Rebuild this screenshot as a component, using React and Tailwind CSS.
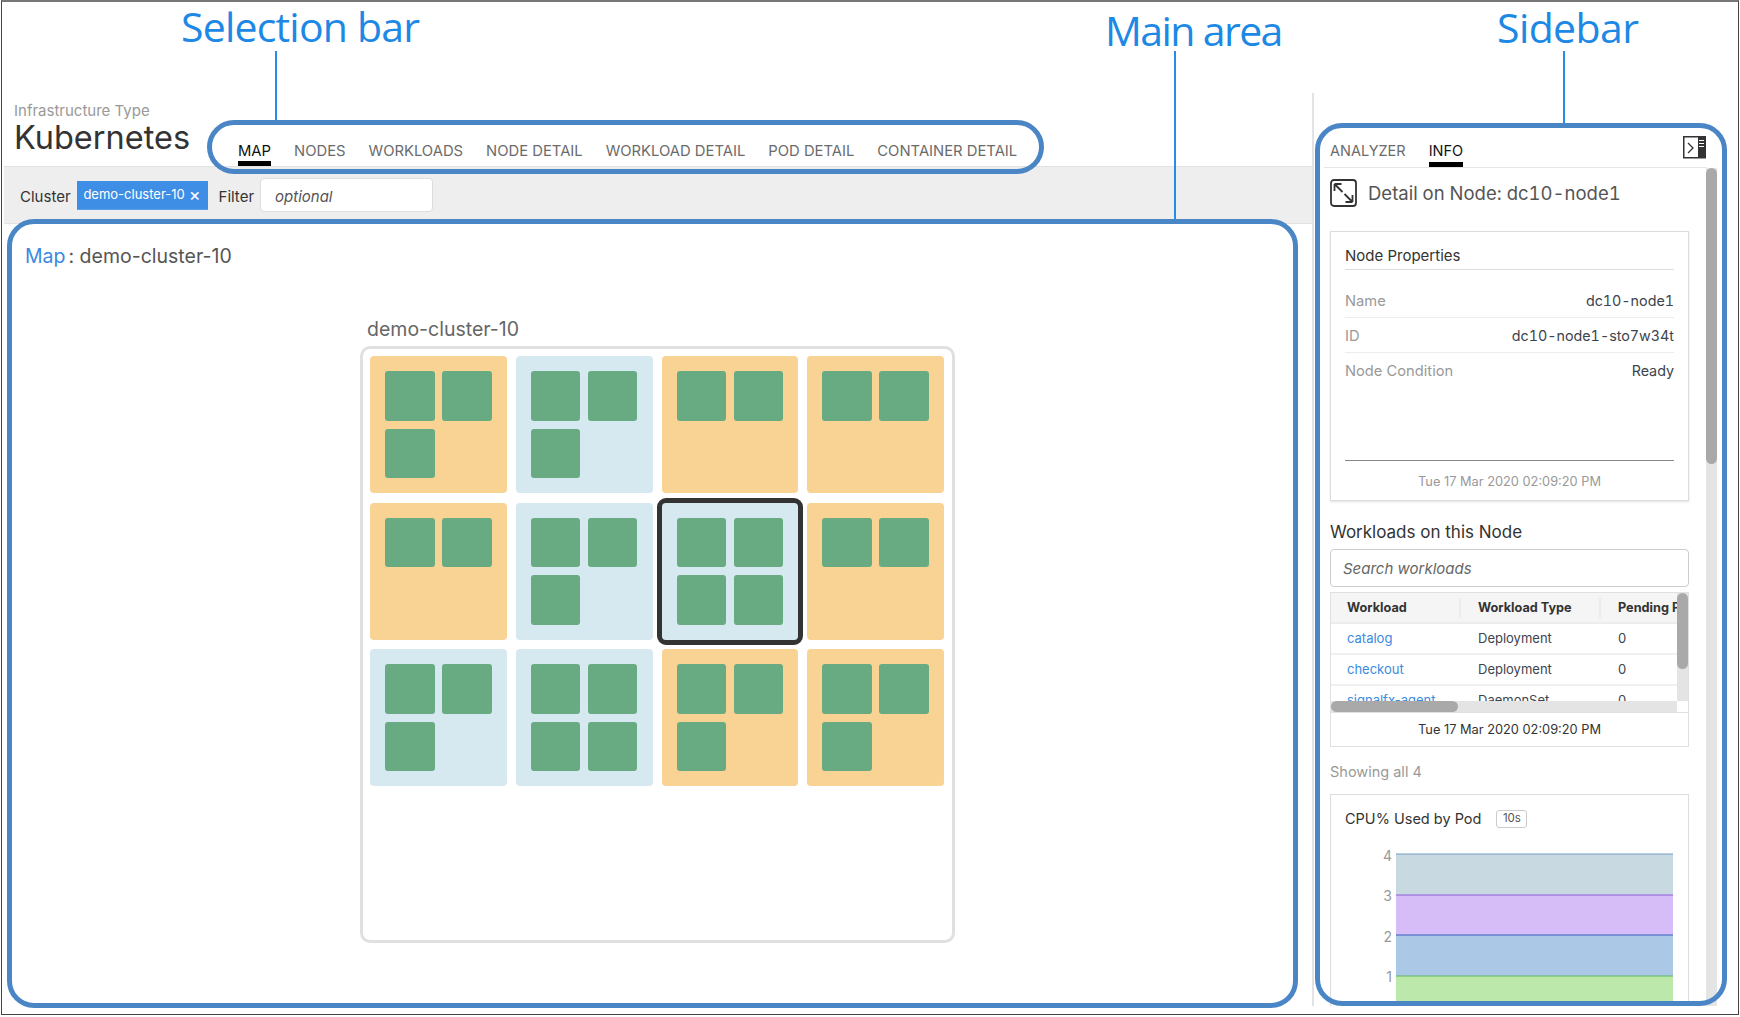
import React from "react";

const O = "bg-[#f9d394]";
const B = "bg-[#d6e9f1]";
const tiles = [
  [O, 3], [B, 3], [O, 2], [O, 2],
  [O, 2], [B, 3], [B, 4, true], [O, 2],
  [B, 3], [B, 4], [O, 3], [O, 3],
];

function Tile({ color, pods, selected }) {
  return (
    <div className={`${color} rounded-[4px] pl-[15px] pt-[15px] ${selected ? "outline-[5px] outline-[#333333]" : ""}`}>
      <div className="grid grid-cols-[49.5px_49.5px] gap-x-[7.5px] gap-y-[8px]">
        {Array.from({ length: pods }).map((_, i) => (
          <div key={i} className="h-[49.5px] rounded-[3px] bg-[#68aa82]" />
        ))}
      </div>
    </div>
  );
}

function ExpandIcon() {
  return (
    <svg width="27" height="28" viewBox="0 0 27 28" fill="none" stroke="#333" strokeWidth="1.8">
      <rect x="1" y="1" width="25" height="26" rx="3" />
      <path d="M4.5 5 L12.5 13 M4.5 5 h7 M4.5 5 v7 M22.5 23 L14.5 15 M22.5 23 h-7 M22.5 23 v-7" />
    </svg>
  );
}

function PanelIcon() {
  return (
    <svg width="23" height="23" viewBox="0 0 23 23" fill="none">
      <rect x="0.75" y="0.75" width="21.5" height="21" fill="#fff" stroke="#333" strokeWidth="1.5" />
      <rect x="15" y="1" width="7" height="21" fill="#333" />
      <path d="M16 4.5h5M16 7.5h5M16 10.5h5" stroke="#fff" strokeWidth="1" />
      <path d="M5 7l5 5-5 5" stroke="#333" strokeWidth="1.3" />
    </svg>
  );
}

function PropRow({ label, value, last }) {
  return (
    <div className={`h-[35px] flex items-center justify-between text-[14.7px] ${last ? "pt-[1px]" : "pt-[2px] border-b border-[#ececec]"}`}>
      <span className="text-[#999999]">{label}</span>
      <span className="text-[14.3px] text-[#3c444d] tabular-nums">{value}</span>
    </div>
  );
}

function TableRow({ a, b, c }) {
  return (
    <div className="grid grid-cols-[130px_140px_1fr] h-[31px] items-center border-b-2 border-[#f0f0f0] text-[13px] text-[#3c444d]">
      <span className="pl-[16px] text-[#3a8ae0]">{a}</span>
      <span className="pl-[17px]">{b}</span>
      <span className="pl-[17px]">{c}</span>
    </div>
  );
}

function Chart() {
  return (
    <svg width="329" height="170" viewBox="0 0 329 170" className="block mt-[16px]">
      <rect x="51" y="9" width="277" height="41" fill="#c9d9e1" />
      <rect x="51" y="50" width="277" height="40" fill="#d7bdf7" />
      <rect x="51" y="90" width="277" height="41" fill="#abc8e6" />
      <rect x="51" y="131" width="277" height="39" fill="#bce8ab" />
      <path d="M51 9h277" stroke="#6f9fc0" />
      <path d="M51 50h277" stroke="#8a5fd8" />
      <path d="M51 90h277" stroke="#3a5fc0" />
      <path d="M51 131h277" stroke="#5cb85c" />
      <g fill="#999" fontSize="14" fontFamily="Inter, sans-serif" textAnchor="end">
        <text x="47" y="16">4</text>
        <text x="47" y="56">3</text>
        <text x="47" y="97">2</text>
        <text x="47" y="137">1</text>
      </g>
    </svg>
  );
}

export default function App() {
  return (
    <div className="relative w-[1740px] h-[1017px] bg-white overflow-hidden font-['Inter',sans-serif]">
      <div className="ml-px w-[1738px] h-[1015px] flex items-start border-t-2 border-t-[#777777] border-x border-b border-x-[#444444] border-b-[#444444] pl-[2px]">
        {/* Left column */}
        <div className="w-[1308px] shrink-0">
          <header className="h-[164px] flex items-end">
            <div className="w-[234px] shrink-0 pl-[10px] pb-[11px]">
              <div className="-mt-[1px] mb-[1px] text-[15px] leading-[18px] text-[#999999]">Infrastructure Type</div>
              <div className="text-[32.5px] leading-[34px] text-[#333333]">Kubernetes</div>
            </div>
            <nav className="flex gap-[23px] text-[14.8px] leading-[20px] text-[#6b6b6b]">
              <span className="text-[#111111] border-b-[5px] border-black">MAP</span>
              <span className="pb-[5px]">NODES</span>
              <span className="pb-[5px]">WORKLOADS</span>
              <span className="pb-[5px]">NODE DETAIL</span>
              <span className="pb-[5px]">WORKLOAD DETAIL</span>
              <span className="pb-[5px]">POD DETAIL</span>
              <span className="pb-[5px]">CONTAINER DETAIL</span>
            </nav>
          </header>
          <div className="h-[58px] flex items-center bg-[#eeeeee] border-y border-[#e2e2e2] pl-[16px] text-[15px] text-[#333333]">
            <span className="pt-[4px]">Cluster</span>
            <span className="ml-[6px] h-[29px] w-[131px] pt-[1px] flex items-center justify-center gap-[4px] bg-[#3f8ee6] border-b border-[#5a9ee8] text-white text-[13px]">
              demo-cluster-10 <span className="text-[18px] leading-none">×</span>
            </span>
            <span className="ml-[11px] pt-[4px]">Filter</span>
            <div className="ml-[6px] h-[34px] w-[173px] flex items-center bg-white rounded-[4px] border border-[#dddddd] pl-[14px] pt-[4px] italic text-[#555555]">optional</div>
          </div>
          <main className="pt-[19px] pl-[21px]">
            <div className="h-[28px] flex items-center text-[19.5px] text-[#555555]">
              <span className="text-[#3a8ae0]">Map</span>
              <span className="ml-[3px]">: demo-cluster-10</span>
            </div>
            <div className="mt-[45px] ml-[342px] h-[28px] flex items-center text-[19.5px] text-[#666666]">demo-cluster-10</div>
            <div className="mt-[2px] ml-[335px] w-[595px] h-[597px] border-[3px] border-[#e0e0e0] rounded-[10px] p-[7px]">
              <div className="grid grid-cols-4 grid-rows-[137px_137px_137px] gap-x-[9px] gap-y-[9.5px] w-[574px]">
                {tiles.map(([c, n, s], i) => (
                  <Tile key={i} color={c} pods={n} selected={s} />
                ))}
              </div>
            </div>
          </main>
        </div>

        {/* Sidebar */}
        <aside className="w-[405px] shrink-0 mt-[91px] h-[913px] border-l-2 border-[#e3e3e3] overflow-hidden flex flex-col">
          <div className="ml-[10px] w-[383px] h-[75px] shrink-0 flex items-end justify-between pl-[6px] border-b border-[#e6e6e6]">
            <div className="flex gap-[23px] text-[14.5px] leading-[20px] text-[#6b6b6b]">
              <span className="pb-[6px]">ANALYZER</span>
              <span className="pb-[1px] text-[#111111] border-b-[5px] border-black">INFO</span>
            </div>
            <div className="mb-[8px] mr-[1px]"><PanelIcon /></div>
          </div>
          <div className="flex flex-1 min-h-0">
            <div className="w-[392px] shrink-0 pl-[16px] pr-[17px] pt-[11px]">
              <div className="flex items-center gap-[11px] h-[28px]">
                <ExpandIcon />
                <span className="pt-[2px] text-[18.5px] text-[#555555] tabular-nums">Detail on Node: dc10-node1</span>
              </div>
              <section className="mt-[24px] h-[270px] border border-[#dddddd] shadow-[0_1px_2px_rgba(0,0,0,0.12)] px-[14px] flex flex-col">
                <div className="h-[38px] shrink-0 flex items-end pb-[2px] border-b border-[#dddddd] text-[15px] text-[#333333]">Node Properties</div>
                <div className="mt-[13px]">
                  <PropRow label="Name" value="dc10-node1" />
                  <PropRow label="ID" value="dc10-node1-sto7w34t" />
                  <PropRow label="Node Condition" value="Ready" last />
                </div>
                <div className="mt-auto h-[40px] shrink-0 pt-[2px] flex items-center justify-center border-t border-[#888888] text-[12.8px] text-[#999999]">Tue 17 Mar 2020 02:09:20 PM</div>
              </section>

              <h2 className="mt-[20px] h-[24px] flex items-center text-[17px] text-[#333333]">Workloads on this Node</h2>
              <div className="mt-[4px] h-[38px] pt-[2px] flex items-center rounded-[4px] border border-[#cccccc] pl-[12px] text-[15px] italic text-[#666666]">Search workloads</div>

              <div className="mt-[5px] h-[155px] border border-[#e0e0e0] flex flex-col">
                <div className="flex h-[119px] shrink-0">
                  <div className="w-[346px] shrink-0">
                    <div className="h-[108px] overflow-hidden">
                      <div className="grid grid-cols-[130px_140px_1fr] h-[31px] items-center bg-[#f5f5f5] border-b-2 border-[#ececec] text-[12.7px] font-bold text-[#333333] whitespace-nowrap overflow-hidden">
                        <span className="pl-[16px] border-r-2 border-[#ececec] h-[20px] flex items-center">Workload</span>
                        <span className="pl-[17px] border-r-2 border-[#ececec] h-[20px] flex items-center">Workload Type</span>
                        <span className="pl-[17px]">Pending Pods</span>
                      </div>
                      <TableRow a="catalog" b="Deployment" c="0" />
                      <TableRow a="checkout" b="Deployment" c="0" />
                      <TableRow a="signalfx-agent" b="DaemonSet" c="0" />
                    </div>
                    <div className="h-[11px] bg-[#e4e4e4]">
                      <div className="h-[11px] w-[127px] rounded-[6px] bg-[#a9a9a9]" />
                    </div>
                  </div>
                  <div className="w-[11px] h-[108px] bg-[#e4e4e4]">
                    <div className="h-[76px] rounded-[6px] bg-[#a9a9a9]" />
                  </div>
                </div>
                <div className="flex-1 flex items-center justify-center border-t border-[#e0e0e0] text-[12.8px] text-[#333333]">Tue 17 Mar 2020 02:09:20 PM</div>
              </div>

              <div className="mt-[13px] h-[24px] flex items-center text-[14.5px] text-[#999999]">Showing all 4</div>

              <section className="mt-[10px] h-[260px] border border-[#dddddd] px-[14px] pt-[14px]">
                <div className="flex items-center h-[20px] text-[14.5px] text-[#333333]">
                  CPU% Used by Pod
                  <span className="ml-[15px] h-[18px] w-[31px] flex items-center justify-center rounded-[3px] border border-[#cccccc] text-[11.5px] text-[#555555]">10s</span>
                </div>
                <Chart />
              </section>
            </div>
            <div className="w-[11px] shrink-0 bg-[#e4e4e4]">
              <div className="h-[296px] rounded-[6px] bg-[#a9a9a9]" />
            </div>
          </div>
        </aside>
      </div>

      {/* Annotation callouts over the page */}
      <div className="absolute left-[181px] top-[0px] text-[41px] leading-[52px] tracking-[-0.8px] text-[#1e88e5] font-['Open_Sans',sans-serif] whitespace-nowrap">Selection bar</div>
      <div className="absolute left-[275px] top-[51px] w-[2px] h-[70px] bg-[#2a8ae8]" />
      <div className="absolute left-[1105px] top-[4px] text-[41px] leading-[52px] tracking-[-1.6px] text-[#1e88e5] font-['Open_Sans',sans-serif] whitespace-nowrap">Main area</div>
      <div className="absolute left-[1174px] top-[51px] w-[2px] h-[169px] bg-[#2a8ae8]" />
      <div className="absolute left-[1497px] top-[1px] text-[41px] leading-[52px] tracking-[-0.6px] text-[#1e88e5] font-['Open_Sans',sans-serif] whitespace-nowrap">Sidebar</div>
      <div className="absolute left-[1563px] top-[51px] w-[2px] h-[73px] bg-[#2a8ae8]" />

      <div className="absolute left-[207px] top-[120px] w-[837px] h-[54px] rounded-[27px] border-[5px] border-[#4a86c5] pointer-events-none" />
      <div className="absolute left-[7px] top-[219px] w-[1291px] h-[789px] rounded-[27px] border-[5px] border-[#4a86c5] pointer-events-none" />
      <div className="absolute left-[1315px] top-[123px] w-[412px] h-[883px] rounded-[27px] border-[5px] border-[#4a86c5] pointer-events-none" />
    </div>
  );
}
